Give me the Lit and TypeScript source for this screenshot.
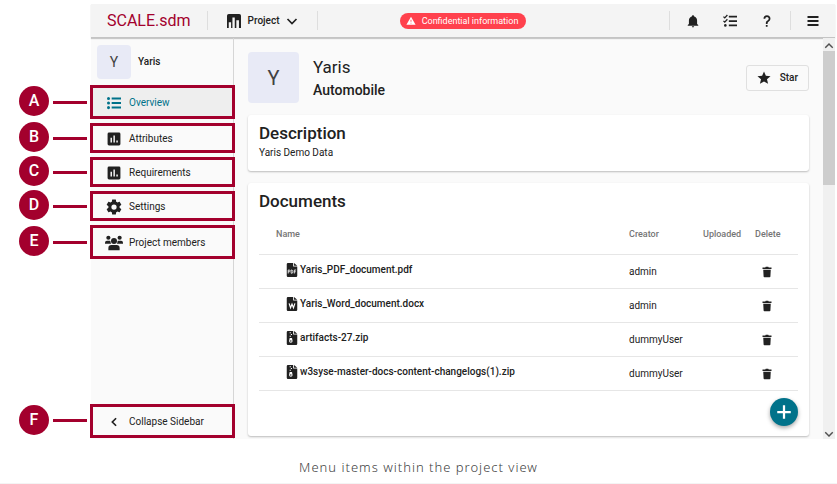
import { LitElement, html, css, svg } from "lit";
import { customElement } from "lit/decorators.js";
import { classMap } from "lit/directives/class-map.js";

const icons = {
  project: svg`<path d="M3 0H21Q24 0 24 3V24H20.500V10.500H16V24H13.300V6H9.300V24H7V14H3V24H0V3Q0 0 3 0Z"/>`,
  chevronDown: svg`<path d="M3 8L12 17L21 8" fill="none" stroke="currentColor" stroke-width="3.400"/>`,
  chevronLeft: svg`<path d="M17 3L8 12L17 21" fill="none" stroke="currentColor" stroke-width="4"/>`,
  alert: svg`<path d="M13 14H11V9H13M13 18H11V16H13M1 21H23L12 2L1 21Z"/>`,
  bell: svg`<path d="M21,19V20H3V19L5,17V11C5,7.9 7.03,5.17 10,4.29C10,4.19 10,4.1 10,4A2,2 0 0,1 12,2A2,2 0 0,1 14,4C14,4.1 14,4.19 14,4.29C16.97,5.17 19,7.9 19,11V17L21,19M14,21A2,2 0 0,1 12,23A2,2 0 0,1 10,21"/>`,
  tasks: svg`<path d="M10 3H24V6H10ZM10 10.500H24V13.500H10ZM10 18H24V21H10Z"/><path d="M.8 4.500L3 6.700L7.500 1.800M.8 11.800L3 14L7.500 9.100" fill="none" stroke="currentColor" stroke-width="2.200"/><circle cx="4" cy="19.500" r="2.200"/>`,
  help: svg`<path d="M10,19H13V22H10V19M12,2C17.35,2.22 19.68,7.62 16.5,11.67C15.67,12.67 14.33,13.33 13.67,14.17C13,15 13,16 13,17H10C10,15.33 10,13.92 10.67,12.92C11.33,11.92 12.67,11.33 13.5,10.67C15.92,8.43 15.32,5.26 12,5A3,3 0 0,0 9,8H6A6,6 0 0,1 12,2Z"/>`,
  menu: svg`<path d="M1 2H23V6H1ZM1 10H23V14H1ZM1 18H23V22H1Z"/>`,
  list: svg`<path d="M8 2.500H24V5.800H8ZM8 10.400H24V13.700H8ZM8 18.200H24V21.500H8Z"/><circle cx="2.600" cy="4.100" r="2.600"/><circle cx="2.600" cy="12" r="2.600"/><circle cx="2.600" cy="19.900" r="2.600"/>`,
  poll: svg`<path fill-rule="evenodd" d="M3.500 1H20.500A2.500 2.500 0 0 1 23 3.500V20.500A2.500 2.500 0 0 1 20.500 23H3.500A2.500 2.500 0 0 1 1 20.500V3.500A2.500 2.500 0 0 1 3.500 1ZM6 10V18H8.500V10ZM11 6V18H13.500V6ZM16 14.500V18H18.500V14.500Z"/>`,
  cog: svg`<path d="M12,15.5A3.5,3.5 0 0,1 8.5,12A3.5,3.5 0 0,1 12,8.5A3.5,3.5 0 0,1 15.5,12A3.5,3.5 0 0,1 12,15.5M19.43,12.97C19.47,12.65 19.5,12.33 19.5,12C19.5,11.67 19.47,11.34 19.43,11L21.54,9.37C21.73,9.22 21.78,8.95 21.66,8.73L19.66,5.27C19.54,5.05 19.27,4.96 19.05,5.05L16.56,6.05C16.04,5.66 15.5,5.32 14.87,5.07L14.5,2.42C14.46,2.18 14.25,2 14,2H10C9.75,2 9.54,2.18 9.5,2.42L9.13,5.07C8.5,5.32 7.96,5.66 7.44,6.05L4.95,5.05C4.73,4.96 4.46,5.05 4.34,5.27L2.34,8.73C2.21,8.95 2.27,9.22 2.46,9.37L4.57,11C4.53,11.34 4.5,11.67 4.5,12C4.5,12.33 4.53,12.65 4.57,12.97L2.46,14.63C2.27,14.78 2.21,15.05 2.34,15.27L4.34,18.73C4.46,18.95 4.73,19.03 4.95,18.95L7.44,17.94C7.96,18.34 8.5,18.68 9.13,18.93L9.5,21.58C9.54,21.82 9.75,22 10,22H14C14.25,22 14.46,21.82 14.5,21.58L14.87,18.93C15.5,18.67 16.04,18.34 16.56,17.94L19.05,18.95C19.27,19.03 19.54,18.95 19.66,18.73L21.66,15.27C21.78,15.05 21.73,14.78 21.54,14.63L19.43,12.97Z"/>`,
  members: svg`<circle cx="4.500" cy="5" r="2.800"/><circle cx="19.500" cy="5" r="2.800"/><circle cx="12" cy="9.400" r="4"/><path d="M0 13V11.500A2.600 2.600 0 0 1 2.600 8.900H6.500Q7 8.900 7.200 9.400Q7.200 11.800 8.300 13ZM24 13V11.500A2.600 2.600 0 0 0 21.400 8.900H17.500Q17 8.900 16.800 9.400Q16.800 11.800 15.700 13ZM4.500 21.500V18.500A4 4 0 0 1 8.500 14.700H15.500A4 4 0 0 1 19.500 18.500V21.500Z"/>`,
  star: svg`<path d="M12,17.800L19 22L17.100 14.200L23.200 9L15.200 8.300L12,1L8.800 8.300L.8 9L6.900 14.200L5 22Z"/>`,
  trash: svg`<path d="M4.500 7.500H19.500L18.800 21Q18.700 22.500 17.200 22.500H6.800Q5.300 22.500 5.200 21ZM3 3H8.500L9.500 1.500H14.500L15.500 3H21V6H3Z"/>`,
  plus: svg`<path d="M12 3V21M3 12H21" fill="none" stroke="currentColor" stroke-width="3"/>`,
  pdf: svg`<path d="M5 0H14V6H21V22Q21 24 19 24H5Q3 24 3 22V2Q3 0 5 0ZM15.500 0L21 4.800H15.500Z"/><path d="M5.500 18V12H7.500Q8.500 12 8.500 13.500T7.500 15H5.500M10.500 12V17.500H12Q13.500 17.500 13.500 15T12 12ZM16 18V12H19M16 15H18.500" fill="none" stroke="#fff" stroke-width="1.400"/>`,
  word: svg`<path d="M5 0H14V6H21V22Q21 24 19 24H5Q3 24 3 22V2Q3 0 5 0ZM15.500 0L21 4.800H15.500Z"/><path d="M7 11L9.500 18.500L12 12L14.500 18.500L17 11" fill="none" stroke="#fff" stroke-width="2"/>`,
  zip: svg`<path d="M5 0H14V6H21V22Q21 24 19 24H5Q3 24 3 22V2Q3 0 5 0ZM15.500 0L21 4.800H15.500Z"/><path d="M8 2H10V4H8ZM10 5H12V7H10ZM8 8H10V10H8Z" fill="#fff"/><path fill="#fff" fill-rule="evenodd" d="M8 12H12L13 17A3 3 0 1 1 7 17ZM10 16A1.300 1.300 0 1 0 10 18.600A1.300 1.300 0 1 0 10 16Z"/>`,
};

type IconName = keyof typeof icons;

const icon = (name: IconName, size = "s14") =>
  html`<svg class="icon ${size}" viewBox="0 0 24 24" fill="currentColor" aria-hidden="true">${icons[name]}</svg>`;

const navItems: { key: string; label: string; icon: IconName; size?: string; tall?: boolean; active?: boolean }[] = [
  { key: "A", label: "Overview", icon: "list", tall: true, active: true },
  { key: "B", label: "Attributes", icon: "poll" },
  { key: "C", label: "Requirements", icon: "poll" },
  { key: "D", label: "Settings", icon: "cog", size: "s18" },
  { key: "E", label: "Project members", icon: "members", size: "s18", tall: true },
];

const documents: { name: string; icon: IconName; creator: string }[] = [
  { name: "Yaris_PDF_document.pdf", icon: "pdf", creator: "admin" },
  { name: "Yaris_Word_document.docx", icon: "word", creator: "admin" },
  { name: "artifacts-27.zip", icon: "zip", creator: "dummyUser" },
  { name: "w3syse-master-docs-content-changelogs(1).zip", icon: "zip", creator: "dummyUser" },
];

@customElement("app-root")
export class AppRoot extends LitElement {
  static styles = css`
    :host {
      --brand: #a3002d;
      --teal: #00728a;
      --ink: #212121;
      display: block;
      background: #fff;
      color: var(--ink);
      font: 400 10px/16px Roboto, sans-serif;
    }
    * { box-sizing: border-box; }
    button { font: inherit; color: inherit; background: none; border: 0; padding: 0; margin: 0; cursor: pointer; }
    a { color: inherit; text-decoration: none; }
    h1, h2, p, figure { margin: 0; padding: 0; }
    .icon { display: block; flex: none; }
    .s10 { width: 10px; height: 10px; }
    .s12 { width: 12px; height: 12px; }
    .s14 { width: 14px; height: 14px; }
    .s16 { width: 16px; height: 16px; }
    .s18 { width: 18px; height: 18px; }

    .figure { padding-top: 4px; border-bottom: 1px solid #f4f4f4; }
    .stage { display: grid; grid-template-columns: 91px minmax(0, 1fr); padding-right: 2px; }

    .callouts { display: flex; flex-direction: column; gap: 4px; padding: 81px 4px 1px 19px; }
    .callout { display: flex; align-items: center; gap: 4px; height: 30px; }
    .callout.tall { height: 34px; }
    .badge {
      display: grid; place-items: center; width: 30px; height: 30px; margin-bottom: 2px;
      border-radius: 50%; background: var(--brand); color: #fff;
      font-size: 16px; font-weight: 500;
    }
    .wire { flex: 1; height: 3px; background: var(--brand); }

    .window { display: flex; flex-direction: column; background: #fafafa; }
    .topbar {
      display: grid; grid-template-columns: 1fr auto 1fr; align-items: center; height: 34px;
      padding: 0 16px; background: #f4f4f4; border-bottom: 1px solid #c4c4c4;
      box-shadow: 0 1px 1px #00000033;
    }
    .group { display: flex; align-items: center; gap: 16px; }
    .group.right { justify-content: flex-end; }
    .logo { color: var(--brand); font-size: 16px; line-height: 24px; }
    .rule { width: 1px; height: 19px; background: #dedede; }
    .switcher { display: flex; align-items: center; gap: 7px; margin: 0 3px; font-weight: 500; }
    .alert {
      display: flex; align-items: center; gap: 6px; height: 16px; padding: 0 8px 0 6px;
      border-radius: 8px; background: #ff414d; color: #fff; font-size: 9px;
    }
    .tools { display: flex; align-items: center; gap: 23px; }

    .body { flex: 1; display: grid; grid-template-columns: 143px minmax(0, 1fr) 12px; }
    .sidebar { display: flex; flex-direction: column; padding: 7px 0 1px; border-right: 1px solid #d6d6d6; }
    .owner { display: flex; align-items: center; gap: 7px; padding-left: 6px; margin-bottom: 6px; font-weight: 500; }
    .avatar { display: grid; place-items: center; border-radius: 4px; background: #e8eaf6; color: #424242; font-weight: 400; }
    .avatar.small { width: 34px; height: 34px; font-size: 14px; }
    .avatar.large { width: 51px; height: 51px; font-size: 20px; }
    .nav { flex: 1; display: flex; flex-direction: column; gap: 4px; margin: 0 -2px 0 -1px; }
    .item {
      display: flex; align-items: center; gap: 6px; width: 100%; height: 30px; padding: 2px 0 0 12px;
      border: 3px solid var(--brand);
    }
    .item.tall { height: 34px; }
    .item.active { background: #eee; color: var(--teal); }
    .slot { display: grid; place-items: center; width: 18px; }
    .end { margin-top: auto; }

    .main { padding: 14px 14px 3px; }
    .head { display: flex; align-items: center; gap: 14px; margin-bottom: 12px; }
    .titles { flex: 1; }
    .name { font-size: 17px; line-height: 24px; font-weight: 400; }
    .kind { font-size: 14px; line-height: 22px; font-weight: 500; }
    .star {
      display: flex; align-items: center; gap: 9px; height: 26px; padding: 0 10px;
      border: 1px solid #e0e0e0; border-radius: 3px; font-weight: 500;
    }
    .card { background: #fff; border-radius: 3px; box-shadow: 0 1px 2px #00000040; padding: 8px 11px 10px; }
    .card + .card { margin-top: 12px; }
    .title { margin-bottom: 2px; font-size: 17px; line-height: 20px; font-weight: 500; }
    .docs { width: 100%; border-collapse: collapse; table-layout: fixed; }
    .docs th { height: 41px; padding: 2px 0 0; text-align: left; font-size: 9px; font-weight: 500; color: #757575; }
    .docs td { height: 34px; padding: 2px 0 0; }
    .docs tr { border-bottom: 1px solid #e6e6e6; }
    .docs .c-name { padding-left: 17px; }
    .c-creator { width: 74px; }
    .c-uploaded { width: 52px; }
    .c-delete { width: 43px; }
    .file { display: flex; align-items: center; gap: 1px; padding: 0 0 4px 26px; font-weight: 500; }
    .del { display: block; margin-left: 6px; }
    .fab {
      display: grid; place-items: center; width: 28px; height: 28px; margin: 7px 0 0 auto;
      border-radius: 50%; background: var(--teal); color: #fff; box-shadow: 0 2px 4px #00000059;
    }
    .scroll { display: flex; flex-direction: column; align-items: center; background: #f0f0f0; color: #505050; padding-top: 3px; }
    .thumb { width: 100%; height: 134px; background: #cdcdcd; }
    .up { transform: rotate(180deg); }
    .caption {
      padding: 18px 0 6px; text-align: center; color: #424242;
      font: 300 13px/20px "Noto Sans", sans-serif; letter-spacing: 1px;
    }
  `;

  render() {
    return html`
      <figure class="figure">
        <div class="stage">
          <div class="callouts">
            ${navItems.map((n) => this.callout(n.key, classMap({ callout: true, tall: !!n.tall })))}
            ${this.callout("F", "callout tall end")}
          </div>
          <div class="window">
            <header class="topbar">
              <div class="group">
                <a class="logo" href="#">SCALE.sdm</a>
                <span class="rule"></span>
                <button class="switcher">${icon("project")}<span>Project</span>${icon("chevronDown", "s12")}</button>
                <span class="rule"></span>
              </div>
              <span class="alert">${icon("alert", "s10")}Confidential information</span>
              <div class="group right">
                <span class="rule"></span>
                <div class="tools">
                  <button aria-label="Notifications">${icon("bell")}</button>
                  <button aria-label="Tasks">${icon("tasks")}</button>
                  <button aria-label="Help">${icon("help")}</button>
                </div>
                <span class="rule"></span>
                <button aria-label="Menu">${icon("menu", "s12")}</button>
              </div>
            </header>
            <div class="body">
              <aside class="sidebar">
                <div class="owner"><span class="avatar small">Y</span>Yaris</div>
                <nav class="nav">
                  ${navItems.map(
                    (n) => html`<a href="#" class=${classMap({ item: true, tall: !!n.tall, active: !!n.active })}>
                      <span class="slot">${icon(n.icon, n.size)}</span>${n.label}
                    </a>`
                  )}
                  <button class="item tall end"><span class="slot">${icon("chevronLeft", "s10")}</span>Collapse Sidebar</button>
                </nav>
              </aside>
              <main class="main">
                <div class="head">
                  <span class="avatar large">Y</span>
                  <div class="titles">
                    <h1 class="name">Yaris</h1>
                    <p class="kind">Automobile</p>
                  </div>
                  <button class="star">${icon("star")}Star</button>
                </div>
                <section class="card">
                  <h2 class="title">Description</h2>
                  <p>Yaris Demo Data</p>
                </section>
                <section class="card">
                  <h2 class="title">Documents</h2>
                  <table class="docs">
                    <thead>
                      <tr>
                        <th class="c-name">Name</th>
                        <th class="c-creator">Creator</th>
                        <th class="c-uploaded">Uploaded</th>
                        <th class="c-delete">Delete</th>
                      </tr>
                    </thead>
                    <tbody>
                      ${documents.map(
                        (d) => html`<tr>
                          <td><a class="file" href="#">${icon(d.icon)}${d.name}</a></td>
                          <td>${d.creator}</td>
                          <td></td>
                          <td><button class="del" aria-label="Delete ${d.name}">${icon("trash", "s12")}</button></td>
                        </tr>`
                      )}
                    </tbody>
                  </table>
                  <button class="fab" aria-label="Add document">${icon("plus", "s18")}</button>
                </section>
              </main>
              <div class="scroll" aria-hidden="true">
                <span class="up">${icon("chevronDown", "s10")}</span>
                <span class="thumb"></span>
                <span class="end">${icon("chevronDown", "s10")}</span>
              </div>
            </div>
          </div>
        </div>
        <figcaption class="caption">Menu items within the project view</figcaption>
      </figure>
    `;
  }

  private callout(key: string, classes: unknown) {
    return html`<div class=${classes}><span class="badge">${key}</span><span class="wire"></span></div>`;
  }
}
